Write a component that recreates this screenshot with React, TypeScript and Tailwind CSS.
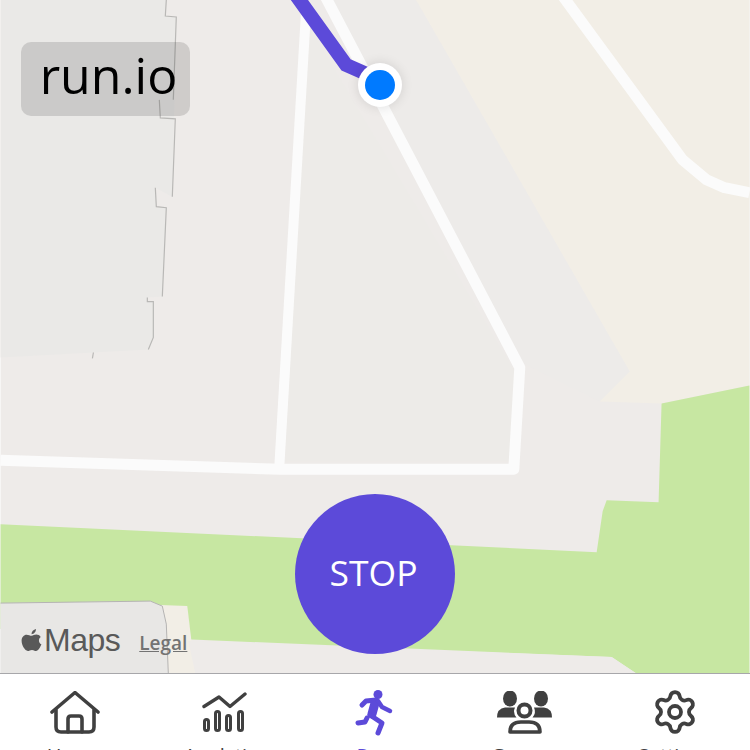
import React from "react";
import { Settings } from "lucide-react";

const PURPLE = "#5c4ad9";

function MapCanvas() {
  return (
    <svg viewBox="0 0 750 674" width="750" height="674" className="block w-full h-full">
      <rect width="750" height="674" fill="#eeebe9" />
      {/* sand land top-right */}
      <polygon points="416,0 750,0 750,386 662,404 600,402 630,372" fill="#f2eee6" />
      {/* soft grey band along the diagonal */}
      <polygon points="330,0 416,0 630,372 600,402 525,365" fill="#edebe9" />
      {/* inner triangle */}
      <polygon points="305,20 515,372 510,462 285,462" fill="#edebe8" />
      {/* building */}
      <polygon points="0,0 166,0 165,16 176,17 172,197 155,188 156,207 166,208 162,297 147,298 147,302 153,302 153,338 148,350 93,353 0,358" fill="#eae9e7" />
      <g fill="none" stroke="#b9b8b6" strokeWidth="1.2">
        <path d="M166 0 L165 16 L176 17 L173 100" />
        <path d="M159 100 L160 118 L175 119 L172 197" />
        <path d="M155 188 L156 207 L166 208 L162 297" />
        <path d="M147 298 L147 302 L153 302 L153 338 L148 350" />
        <path d="M93 353 L92 359" />
      </g>
      {/* park */}
      <polygon points="0,525 597,553 603,512 607,501 659,503 662,404 750,386 750,674 636,674 612,658 180,640 0,630" fill="#c7e7a2" />
      {/* lower-left sand and building */}
      <polygon points="160,606 187,607 195,674 168,674" fill="#f2eee6" />
      <polygon points="188,642 612,658 636,674 195,674" fill="#eeebe9" />
      <polygon points="0,604 150,602 162,607 166,625 168,674 0,674" fill="#e8e7e5" />
      <path d="M0 604 L150 602 L162 607 L166 625 L168 674" fill="none" stroke="#b5b4b3" strokeWidth="1" />
      {/* roads */}
      <g fill="none" stroke="#fbfbfb" strokeLinejoin="round">
        <path d="M325 -4 L520 368 L514 470 L280 470 L0 461" strokeWidth="11" />
        <path d="M306 10 L279 470" strokeWidth="10" />
        <path d="M563 -4 L683 160 L707 180 L725 188 L750 193" strokeWidth="11" />
      </g>
      {/* route */}
      <path d="M295 -6 L346 65 L380 80" fill="none" stroke={PURPLE} strokeWidth="14" strokeLinejoin="miter" />
    </svg>
  );
}

function HomeIcon() {
  return (
    <svg width="50" height="44" viewBox="0 0 50 44" fill="none" stroke="#404040" strokeWidth="3.6" strokeLinecap="round" strokeLinejoin="round">
      <path d="M2 21 L25 1.5 L48 21" />
      <path d="M6 19 V36 Q6 41 11 41 H39 Q44 41 44 36 V19" />
      <path d="M18 41 V28 Q18 25 21 25 H29 Q32 25 32 28 V41" />
    </svg>
  );
}

function ChartIcon() {
  return (
    <svg width="46" height="44" viewBox="0 0 46 44" fill="none" stroke="#404040" strokeWidth="3" strokeLinecap="round" strokeLinejoin="round">
      <path d="M2 15.5 L17 6 L28 15.5 L43 3" strokeWidth="3.4" />
      <rect x="2.5" y="28.5" width="4" height="11" rx="2" />
      <rect x="13.5" y="20.5" width="4" height="19" rx="2" />
      <rect x="24.5" y="24.5" width="4" height="15" rx="2" />
      <rect x="36.5" y="20.5" width="4" height="19" rx="2" />
    </svg>
  );
}

function RunIcon() {
  return (
    <svg width="38" height="44" viewBox="0 0 38 44" fill="none" stroke={PURPLE} strokeLinecap="round" strokeLinejoin="round" className="overflow-visible">
      <circle cx="22" cy="3.5" r="4.5" fill={PURPLE} stroke="none" />
      <path d="M6 14 L10 10 L20 9" strokeWidth="5" />
      <path d="M19 12 L16 23" strokeWidth="9" />
      <path d="M22 10 L26 16 L34 20" strokeWidth="4.5" />
      <path d="M14 24 L26 32 L22 42" strokeWidth="5" />
      <path d="M2 32 L9 31 L11 27" strokeWidth="5" />
    </svg>
  );
}

function GroupIcon() {
  return (
    <svg width="56" height="44" viewBox="0 0 56 44" fill="none">
      <ellipse cx="13" cy="7.5" rx="7" ry="8" fill="#404040" />
      <ellipse cx="44" cy="7.5" rx="7" ry="8" fill="#404040" />
      <path d="M0 26.5 Q0 17.5 8 16.5 H18 Q15.5 22 19.5 26.5 Z" fill="#404040" />
      <path d="M55 26.5 Q55 17.5 47 16.5 H37 Q39.5 22 35.5 26.5 Z" fill="#404040" />
      <ellipse cx="27.5" cy="19.5" rx="6" ry="6" stroke="#404040" strokeWidth="4" />
      <path d="M13 41 Q13 31 24 31 H32 Q43 31 43 41 Z" stroke="#404040" strokeWidth="3.6" strokeLinejoin="round" />
    </svg>
  );
}

function GearIcon() {
  return <Settings size={48} strokeWidth={1.9} color="#404040" className="-translate-y-px" />;
}

const tabs = [
  { label: "Home", icon: <HomeIcon />, color: "text-[#404040]" },
  { label: "Analytics", icon: <ChartIcon />, color: "text-[#404040]" },
  { label: "Run", icon: <RunIcon />, color: "text-[#5c4ad9]" },
  { label: "Groups", icon: <GroupIcon />, color: "text-[#404040]" },
  { label: "Settings", icon: <GearIcon />, color: "text-[#404040]" },
];

export default function App() {
  return (
    <div className="w-[750px] h-[750px] flex flex-col overflow-hidden bg-white font-['Open_Sans',sans-serif]">
      <div className="relative h-[673px] overflow-hidden">
        <MapCanvas />
        <div className="absolute left-[21px] top-[42px] w-[169px] h-[74px] rounded-[10px] bg-[#00000021] flex items-center justify-center">
          <span className="text-[50px] font-medium leading-none text-black ml-[6px] -mt-[8px]">run.io</span>
        </div>
        <div className="absolute left-[358px] top-[63px] w-11 h-11 rounded-full bg-white flex items-center justify-center shadow-[0_0_12px_rgba(0,0,0,0.12)]">
          <div className="w-[30px] h-[30px] rounded-full bg-[#007aff]" />
        </div>
        <div className="absolute left-[21px] top-[624px] flex items-center text-[#595959]">
          <svg width="21" height="24" viewBox="0 1 21 23" preserveAspectRatio="none" fill="#595959">
            <path d="M15 2 C15 5 12.5 7 10.5 7 C10.5 4.5 12.5 2.5 15 2 Z" />
            <path d="M10.6 8.4 C12 8.4 13.4 7.3 15.4 7.3 C17 7.3 18.6 8 19.7 9.6 C17.4 11 17.2 15.2 20.4 16.6 C19.5 19 17.4 23 15 23 C13.4 23 12.8 22 11 22 C9 22 8.4 23 6.8 23 C4 23 0.6 17.5 0.6 13.3 C0.6 9.6 3 7.4 5.6 7.4 C7.6 7.4 9 8.4 10.6 8.4 Z" />
          </svg>
          <span className="text-[32px] leading-none tracking-[-0.5px] ml-[2px] font-['Liberation_Sans',sans-serif]">Maps</span>
          <span className="text-[19px] leading-none font-semibold underline ml-[19px] mt-[6px] text-[#737373]">Legal</span>
        </div>
        <div className="absolute left-[295px] top-[494px] w-40 h-40 rounded-full bg-[#5c4ad9] flex items-center justify-center">
          <span className="text-[35.5px] text-white leading-none -ml-[3px] -mt-[2px]">STOP</span>
        </div>
      </div>
      <nav className="h-[77px] border-t border-[#a7a7aa] bg-white flex items-start overflow-hidden">
        {tabs.map((t) => (
          <div key={t.label} className="flex-1 flex flex-col items-center pt-[17px]">
            <div className="h-11 flex items-center justify-center">{t.icon}</div>
            <span className={`text-[20px] leading-[24px] mt-[9px] ${t.color}`}>{t.label}</span>
          </div>
        ))}
      </nav>
    </div>
  );
}
